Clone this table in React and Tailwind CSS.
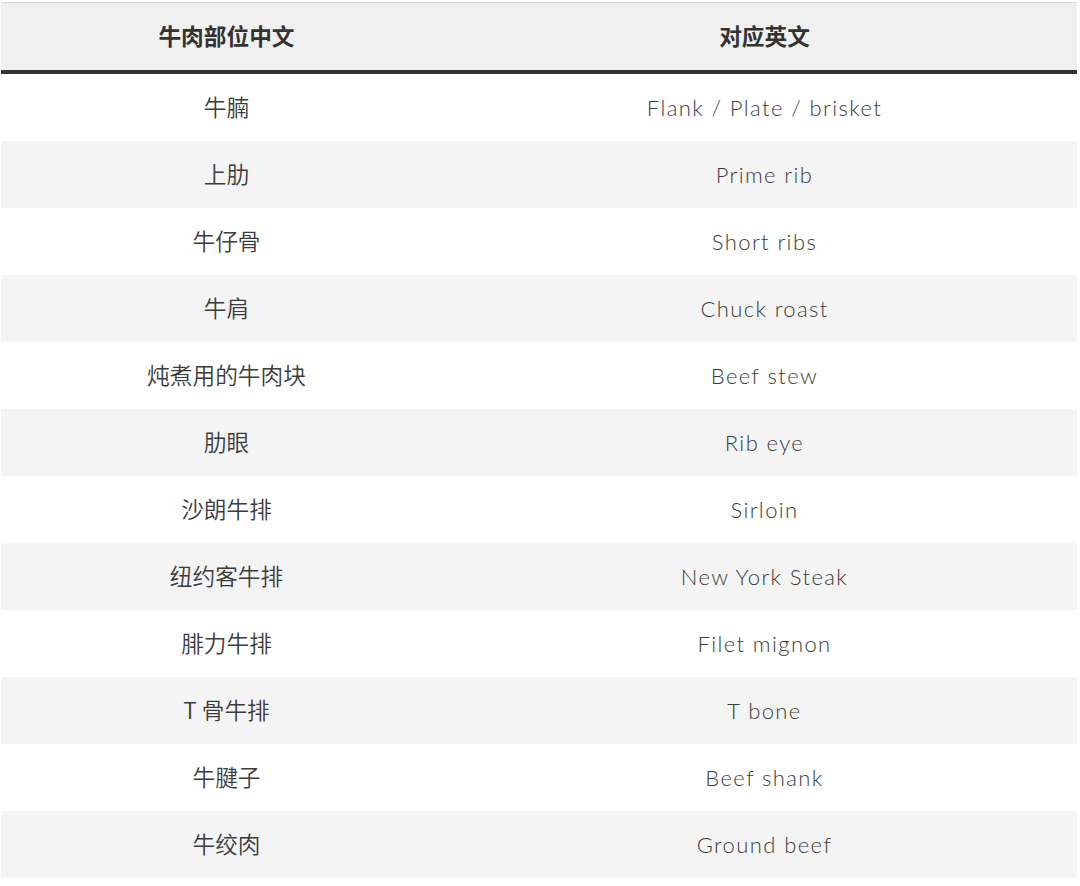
const rows = [
  ["牛腩", "Flank / Plate / brisket"],
  ["上肋", "Prime rib"],
  ["牛仔骨", "Short ribs"],
  ["牛肩", "Chuck roast"],
  ["炖煮用的牛肉块", "Beef stew"],
  ["肋眼", "Rib eye"],
  ["沙朗牛排", "Sirloin"],
  ["纽约客牛排", "New York Steak"],
  ["腓力牛排", "Filet mignon"],
  ["T 骨牛排", "T bone"],
  ["牛腱子", "Beef shank"],
  ["牛绞肉", "Ground beef"],
];

export default function App() {
  return (
    <div className="w-[1080px] h-[886px] bg-white pt-[2px] pl-px pr-[3px]">
      <div className="border-t border-[#dcdcdc]">
        <div className="grid grid-cols-[451px_1fr] h-[67px] bg-[#f0f0f0] items-center text-center text-[22.7px] font-bold text-[#333] font-['Noto_Sans_CJK_SC',sans-serif]">
          <div>牛肉部位中文</div>
          <div>对应英文</div>
        </div>
        <div className="h-1 bg-[#333]" />
        {rows.map(([zh, en], i) => (
          <div
            key={i}
            className={`grid grid-cols-[451px_1fr] h-[67px] items-center text-center text-[#3c3c3c] ${i % 2 === 1 ? "bg-[#f4f4f4]" : "bg-white"}`}
          >
            <div className="text-[22.7px] font-[350] font-['Noto_Sans_CJK_SC',sans-serif]">{zh}</div>
            <div className="text-[22px] font-light tracking-[1.4px] font-['Lato','Noto_Sans_CJK_SC',sans-serif]">{en}</div>
          </div>
        ))}
      </div>
    </div>
  );
}
